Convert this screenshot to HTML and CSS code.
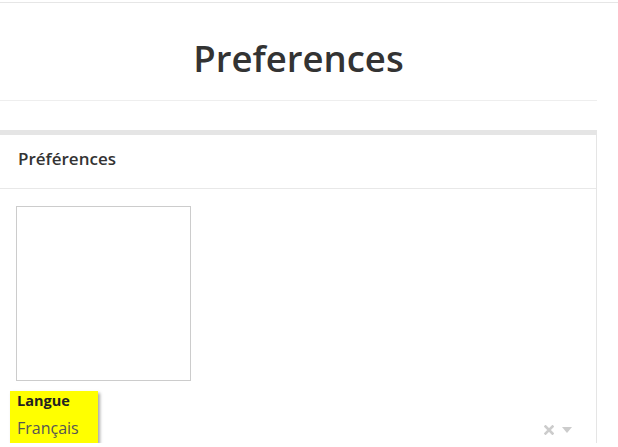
FILE: index.html
```html
<!DOCTYPE html>
<html lang="fr">
<head>
    <meta charset="UTF-8">
    <meta name="viewport" content="width=device-width, initial-scale=1.0">
    <title>Preferences</title>
    <link rel="stylesheet" href="styles.css">
</head>
<body>
    <div class="top-rule"></div>
    <header class="page-header">
        <h1>Preferences</h1>
    </header>

    <div class="panel">
        <div class="panel-heading">Préférences</div>
        <div class="panel-body">
            <div class="avatar"></div>

            <div class="field">
                <div class="field-mark">
                    <label class="field-label">Langue</label>
                    <span class="field-value">Français</span>
                </div>
                <div class="select-line">
                    <svg class="select-clear" width="10" height="10" viewBox="0 0 10 10">
                        <path d="M1.5 1.5 L8.5 8.5 M8.5 1.5 L1.5 8.5" stroke="#ccc" stroke-width="2.6" stroke-linecap="square"/>
                    </svg>
                    <span class="select-caret"></span>
                </div>
            </div>
        </div>
    </div>
</body>
</html>
```

FILE: styles.css
```css
body {
    margin: 0;
    font-family: "Open Sans", Arial, sans-serif;
    color: #333;
    background: #fff;
    overflow: hidden;
}

.top-rule {
    height: 2px;
    border-bottom: 1px solid #e6e6e6;
}

.page-header {
    width: 597px;
    height: 97px;
    border-bottom: 1px solid #eee;
    text-align: center;
}

.page-header h1 {
    margin: 0;
    padding-top: 31px;
    font-size: 36.5px;
    font-weight: 600;
    line-height: 48px;
}

.panel {
    margin-top: 29px;
    margin-left: -20px;
    width: 616px;
    border-top: 5px solid #e5e5e5;
    border-right: 1px solid #e5e5e5;
    background: #fff;
}

.panel-heading {
    height: 53px;
    padding-left: 38px;
    border-bottom: 1px solid #e8e8e8;
    font-size: 17px;
    font-weight: 600;
    line-height: 48px;
}

.panel-body {
    padding: 17px 0 0 36px;
}

.avatar {
    width: 173px;
    height: 173px;
    border: 1px solid #ccc;
}

.field {
    position: relative;
    margin-top: 10px;
    margin-left: -6px;
    width: 568px;
}

.field-mark {
    position: relative;
    z-index: 1;
    display: flex;
    flex-direction: column;
    width: 88px;
    height: 52px;
    box-sizing: border-box;
    padding: 0 0 0 7px;
    background: #ffff00;
    box-shadow: 2px 2px 3px rgba(0, 0, 0, 0.35);
}

.field-label {
    font-size: 14.5px;
    font-weight: 700;
    line-height: 20px;
    color: #222;
}

.field-value {
    margin-top: 6px;
    font-size: 16px;
    line-height: 22px;
    color: #555;
}

.select-line {
    position: absolute;
    left: 0;
    right: 0;
    bottom: -2px;
    height: 30px;
    border-bottom: 1px solid #ccc;
}

.select-clear {
    position: absolute;
    right: 24px;
    top: 11px;
}

.select-caret {
    position: absolute;
    right: 6px;
    top: 13px;
    width: 0;
    height: 0;
    border-left: 5px solid transparent;
    border-right: 5px solid transparent;
    border-top: 6px solid #ccc;
}
```
